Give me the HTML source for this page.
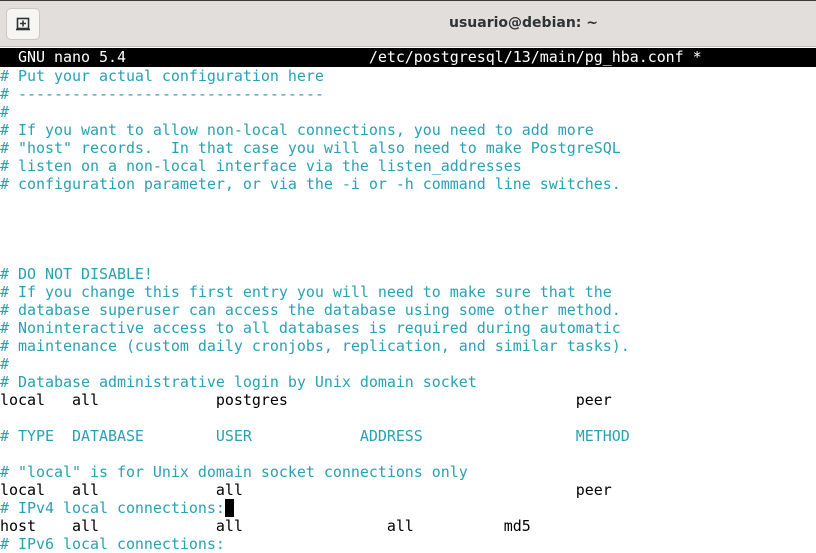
<!DOCTYPE html>
<html><head><style>
body{margin:0;width:816px;height:553px;overflow:hidden;background:#fff;font-family:"DejaVu Sans Mono",monospace}
#tb{position:absolute;left:0;top:0;width:816px;height:47px;background:#e1dedb;border-top:1px solid #3a3a3a;box-sizing:border-box;border-bottom:1px solid #c0bdb9}
#btn{position:absolute;left:6px;top:7px;width:34px;height:32px;background:#f6f5f4;border:1px solid #cdc7c2;border-radius:5px;box-sizing:border-box}
#title{position:absolute;left:449px;top:14px;font:bold 14px "DejaVu Sans","Liberation Sans",sans-serif;color:#2e3436}
#term{position:absolute;left:0;top:48px;width:816px}
pre{margin:0;font:15px/18px "DejaVu Sans Mono",monospace;letter-spacing:-0.035px;color:#000;white-space:pre}
.bar{background:#000;color:#fff;height:19px;line-height:19px}
.c{color:#2aa1b3}
.cur{background:#000}
</style></head><body>
<div id="tb"><div id="btn"><svg width="34" height="32" viewBox="0 0 34 32" style="position:absolute;left:-1px;top:-1px"><rect x="11.5" y="10.5" width="11" height="10" fill="none" stroke="#2e3436" stroke-width="1.6"/><line x1="10" y1="21.5" x2="24" y2="21.5" stroke="#2e3436" stroke-width="1.6"/><path d="M17 12.5v6M14 15.5h6" stroke="#2e3436" stroke-width="1.6"/></svg></div><div id="title">usuario@debian: ~</div></div>
<div id="term"><pre class="bar">  GNU nano 5.4                           /etc/postgresql/13/main/pg_hba.conf *</pre><pre><span class="c"># Put your actual configuration here
# ----------------------------------
#
# If you want to allow non-local connections, you need to add more
# "host" records.  In that case you will also need to make PostgreSQL
# listen on a non-local interface via the listen_addresses
# configuration parameter, or via the -i or -h command line switches.




# DO NOT DISABLE!
# If you change this first entry you will need to make sure that the
# database superuser can access the database using some other method.
# Noninteractive access to all databases is required during automatic
# maintenance (custom daily cronjobs, replication, and similar tasks).
#
# Database administrative login by Unix domain socket</span>
local   all             postgres                                peer

<span class="c"># TYPE  DATABASE        USER            ADDRESS                 METHOD</span>

<span class="c"># "local" is for Unix domain socket connections only</span>
local   all             all                                     peer
<span class="c"># IPv4 local connections:</span><span class="cur"> </span>
host    all             all                all          md5
<span class="c"># IPv6 local connections:</span></pre></div>
</body></html>
